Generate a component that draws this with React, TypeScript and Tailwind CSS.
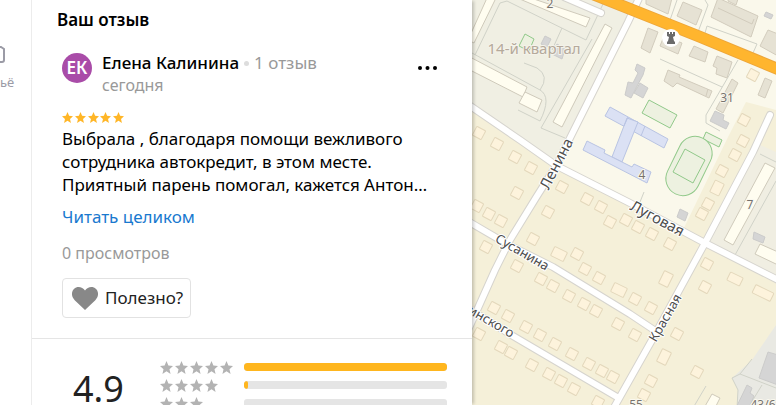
import React from 'react';

const StarIcon = ({ className }: { className: string }) => (
    <svg viewBox="0 0 24 24" className={className} fill="currentColor" aria-hidden="true">
        <path d="M12 0l3.500 8.300 8.500.8-6.500 5.900 2 8.800L12 19l-7.500 4.800 2-8.800L0 9.100l8.500-.8z" />
    </svg>
);

const HeartIcon = () => (
    <svg viewBox="0 0 26 23" className="h-[23px] w-[26px] text-[#888888]" fill="currentColor" aria-hidden="true">
        <path d="M13 23L2.700 13.200C-.9 9.700-.8 4.500 2 1.900 5.200-1 10.400-.3 13 3.600 15.600-.3 20.800-1 24 1.900c2.800 2.600 2.900 7.800-.7 11.300z" />
    </svg>
);

const DotsIcon = () => (
    <svg viewBox="0 0 20 4" className="h-1 w-5" fill="currentColor" aria-hidden="true">
        <circle cx="2" cy="2" r="2" />
        <circle cx="9.500" cy="2" r="2" />
        <circle cx="17" cy="2" r="2" />
    </svg>
);

const ratings = [
    { stars: 5, percent: 100 },
    { stars: 4, percent: 2 },
    { stars: 3, percent: 0 },
    { stars: 2, percent: 0 },
    { stars: 1, percent: 0 },
];

// Map data: centres of the private houses, all turned the same way as the streets
const houses = [
    [479, 133], [497, 144], [515, 157], [531, 168], [562, 187], [517, 193], [548, 212], [587, 199],
    [601, 207], [610, 222], [626, 220], [477, 206], [489, 214], [501, 221], [533, 239], [486, 247],
    [517, 266], [577, 254], [585, 269], [599, 278], [541, 279], [553, 286], [569, 296], [584, 304],
    [596, 311], [618, 324], [494, 308], [508, 316], [526, 327], [540, 335], [555, 344], [572, 354],
    [589, 364], [602, 371], [613, 377], [479, 334], [501, 347], [511, 353], [532, 365], [549, 374],
    [561, 381], [574, 389], [598, 402], [743, 141], [735, 155], [722, 171], [708, 204], [702, 214],
    [638, 227], [652, 234], [670, 244], [707, 264], [705, 287], [635, 299], [651, 308],
    [677, 334], [635, 335], [697, 372], [651, 381], [644, 395], [753, 75], [744, 120],
];

const bigHouses = [
    { x: 559, y: 254, w: 14, h: 10 },
    { x: 619, y: 290, w: 14, h: 10 },
    { x: 735, y: 279, w: 14, h: 9 },
    { x: 763, y: 293, w: 20, h: 9 },
    { x: 717, y: 188, w: 10, h: 13 },
    { x: 666, y: 279, w: 10, h: 14 },
    { x: 664, y: 357, w: 10, h: 14 },
];

const blocks = [
    '487,-2 496,-2 474,43 468,40',
    '515,-3 525,-4 590,18 586,27',
    '605,24 612,28 562,127 553,122',
    '468,56 527,87 523,97 468,69',
    '525,92 542,100 537,112 519,103',
    '765,163 775,168 733,245 724,240',
    '760,244 778,252 778,265 755,254',
    '712,394 720,398 714,410 704,408',
];

const buildings = [
    '646,-2 672,-2 668,14 646,4',
    '683,2 702,10 696,25 677,16',
    '718,-2 758,16 751,37 711,17',
    '729,-5 738,-1 736,5 728,1',
    '768,30 778,34 778,56 760,46',
    '648,28 658,32 650,53 641,48',
    '664,36 682,43 678,54 660,46',
    '694,46 708,52 705,62 689,56',
    '717,56 732,62 727,78 716,74 717,68 713,66',
    '668,70 680,75 679,77 712,91 709,98 677,83 673,87 664,81',
    '732,79 738,83 723,113 716,109',
    '765,78 772,81 765,98 758,95',
];

const greyBuildings = [
    '637,64 645,68 643,75 636,88 631,98 625,95 628,82 633,83 638,73 635,70',
    '640,83 648,88 643,98 634,93',
    '715,111 724,115 723,120 729,123 726,129 710,121',
    '545,36 551,39 547,47 541,44',
    '557,44 565,49 562,59 552,54',
    '766,12 773,15 771,19 764,16',
    '754,232 765,237 763,243 753,239',
    '680,209 688,213 685,221 677,217',
    '768,352 778,355 778,385 759,378',
    '747,385 752,388 750,393 754,396 748,410 735,410',
];

const school = [
    '610,107 668,139 664,148 605,116',
    '627,118 638,122 622,162 612,157',
    '587,141 605,150 604,153 632,167 634,164 651,172 647,183 583,150',
];

const paths = [
    'M475 55 500 3 507 1 586 40 603 4',
    'M562 28 552 50',
    'M592 39 541 128 565 138',
    'M518 110 540 121',
    'M524 63 537 68Q550 76 540 90',
    'M472 53 540 90Q552 97 540 121',
    'M660 59 722 87M738 60 706 115V123L720 131',
    'M705 33 707 26 757 44 753 53',
    'M698 32 708 5 705 0M670 20 677 0',
    'M644 192 640 202',
    'M735 255 776 181M760 154 776 162',
    'M752 359 740 374 776 388M706 386 693 408M762 385 748 408',
    'M740 374 732 378 738 390 737 408',
];

const roads = [
    'M641 -6 628 22 568 142 556 166 537 196 510 240 495 270 478 308 468 330',
    'M466 103 520 140 557 166 630 203 705 243 780 281',
    'M770 115 753 152 705 243 652 340 612 411',
    'M466 220 507 244 553 267 630 314 657 332',
    'M466 307 513 336 617 397',
    'M564 -3 601 13',
];

const TowerPin = () => (
    <g>
        <circle cx="671" cy="38" r="9" fill="#ffffff" />
        <path d="M667 32h2v2h1v-2h2v2h1v-2h2v4l-2 1 1 4 1 1v2h-8v-2l1-1 1-4-2-1z" fill="#6b6b6b" />
    </g>
);

const CityMap = () => (
    <svg
        viewBox="472 0 304 405"
        preserveAspectRatio="xMinYMin slice"
        className="block h-full w-full"
        role="img"
        aria-label="Карта"
    >
        <rect x="472" width="1200" height="1600" fill="#f5f0d9" />
        {/* districts */}
        <path d="M472 0H640L566 146 557 166 472 107z" fill="#f0efe3" />
        <path d="M640 0H776V110L746 102 728 137 682 232 557 166z" fill="#faf8eb" />
        <path d="M758 144 776 152V281L705 243z" fill="#f0eee2" />
        <path d="M776 325 752 360 732 378 738 390 737 405H776z" fill="#e9e9e3" />
        <g fill="none" stroke="#d0d2c8" strokeWidth="1">
            {paths.map((d) => <path key={d} d={d} />)}
        </g>

        {/* school grounds */}
        <g fill="#edf1e0" stroke="#91c98a" strokeWidth="1">
            <polygon points="649,100 677,115 670,128 642,113" />
            <polygon points="706,132 722,140 719,147 703,139" />
            <polygon points="525,34 534,39 529,51 519,46" />
            <rect x="672" y="135" width="34" height="62" rx="17" transform="rotate(26 689 166)" />
            <polygon points="685,149 705,160 693,183 673,172" />
        </g>
        <g fill="#dbe1f4" stroke="#b9c4e3" strokeWidth="1">
            {school.map((points) => <polygon key={points} points={points} />)}
            <path d="M628 117 624 126M645 126 641 136" />
        </g>

        {/* streets */}
        <g fill="none" stroke="#d6d4ce" strokeWidth="8" strokeLinecap="round" strokeLinejoin="round">
            {roads.map((d) => <path key={d} d={d} />)}
        </g>
        <g fill="none" stroke="#ffffff" strokeWidth="6" strokeLinecap="round" strokeLinejoin="round">
            {roads.map((d) => <path key={d} d={d} />)}
        </g>
        <path d="M580 -11 620 5 698 36 780 70" fill="none" stroke="#eda63a" strokeWidth="12" />
        <path d="M580 -11 620 5 698 36 780 70" fill="none" stroke="#ffb52e" strokeWidth="10" />

        {/* buildings */}
        <g fill="#fffdf0" stroke="#cfcabb" strokeWidth="1" strokeLinejoin="round">
            {blocks.map((points) => <polygon key={points} points={points} />)}
        </g>
        <g fill="#e6e2d4" stroke="#d2ccbd" strokeWidth="1" strokeLinejoin="round">
            {buildings.map((points) => <polygon key={points} points={points} />)}
            <path d="M718 8 752 24 754 19M708 89 706 96" />
        </g>
        <g fill="#d5d5d5" stroke="#cbcbca" strokeWidth="1" strokeLinejoin="round">
            {greyBuildings.map((points) => <polygon key={points} points={points} />)}
        </g>
        <g fill="#fdf3dc" stroke="#e3d7bb" strokeWidth="1">
            {houses.map(([x, y]) => (
                <rect key={`${x}-${y}`} x={x - 5} y={y - 5} width="10" height="10" rx="1" transform={`rotate(28 ${x} ${y})`} />
            ))}
            {bigHouses.map(({ x, y, w, h }) => (
                <rect key={`${x}-${y}`} x={x - w / 2} y={y - h / 2} width={w} height={h} rx="1" transform={`rotate(26 ${x} ${y})`} />
            ))}
        </g>

        <TowerPin />

        {/* labels */}
        <g className="font-['Noto_Sans',sans-serif]" textAnchor="middle" strokeLinejoin="round" paintOrder="stroke">
            <text x="534" y="54" fontSize="15" fill="#b5a99b" stroke="#f4f3ea" strokeWidth="2">14-й квартал</text>
            <g fontSize="12" fill="#77736e" stroke="#faf8ee" strokeWidth="2">
                <text x="550" y="8">2</text>
                <text x="727" y="102">31</text>
                <text x="642" y="179">4</text>
                <text x="750" y="209">7</text>
                <text x="636" y="409">55</text>
                <text x="763" y="409">43/6</text>
            </g>
            <g fontSize="15" fill="#4d4d4d" stroke="#ffffff" strokeWidth="2">
                <text transform="translate(561 166) rotate(-63)">Ленина</text>
                <text transform="translate(655 223) rotate(28)">Луговая</text>
                <g fontSize="13">
                    <text transform="translate(520 256) rotate(30)">Сусанина</text>
                    <text transform="translate(669 320) rotate(-60)">Красная</text>
                    <text transform="translate(511 338) rotate(30)" textAnchor="end">инского</text>
                </g>
            </g>
        </g>
    </svg>
);

const SideRail = () => (
    <nav className="flex w-8 shrink-0 flex-col items-start overflow-hidden border-r border-[#ececec] pt-11">
        <a href="#housing" className="flex flex-col text-[13px] leading-5 text-[#9b9ba6]">
            <svg viewBox="0 0 6 22" className="mb-[6px] h-[22px] w-[6px]" fill="none" stroke="currentColor" strokeWidth="2" aria-hidden="true">
                <path d="M-3 3H1L4 5V16Q4 18 2 18H-3" />
            </svg>
            <span>ьё</span>
        </a>
    </nav>
);

const Review = () => (
    <section className="border-b border-[#e5e5e5] pt-2 pb-5">
        <h2 className="px-[25px] text-[17px] leading-6 font-semibold">Ваш отзыв</h2>
        <div className="px-[30px] pt-5">
            <div className="flex items-start gap-[10px]">
                <div className="mt-px flex h-[30px] w-[30px] items-center justify-center rounded-full bg-[#a94ca8] text-[17px] font-semibold text-white">
                    ЕК
                </div>
                <div className="flex-1 leading-[22px]">
                    <div className="flex items-center gap-[5px] text-[17px]">
                        <span className="font-medium">Елена Калинина</span>
                        <span className="h-[5px] w-[5px] rounded-full bg-[#dddddd]" />
                        <span className="text-[#999999]">1 отзыв</span>
                    </div>
                    <div className="text-base leading-[22px] text-[#999999]">сегодня</div>
                </div>
                <button type="button" aria-label="Ещё" className="mt-1 mr-[2px] flex h-6 w-6 items-center justify-center">
                    <DotsIcon />
                </button>
            </div>

            <div className="mt-4 flex w-[62px] justify-between text-[#ffb627]" role="img" aria-label="Оценка 5">
                {[1, 2, 3, 4, 5].map((n) => <StarIcon key={n} className="h-[11px] w-[11px]" />)}
            </div>
            <p className="mt-1 text-[17px] leading-[23px]">
                Выбрала , благодаря помощи вежливого<br />
                сотрудника автокредит, в этом месте.<br />
                Приятный парень помогал, кажется Антон…
            </p>
            <a href="#review" className="mt-[9px] block text-[17px] leading-6 text-[#1979cf]">Читать целиком</a>
            <div className="mt-3 text-base leading-6 text-[#999999]">0 просмотров</div>
            <button type="button" className="mt-[13px] flex h-10 items-center gap-[7px] rounded border border-[#e2e2e2] pr-[7px] pl-[9px] text-[17px] text-[#222222]">
                <HeartIcon />
                Полезно?
            </button>
        </div>
    </section>
);

const RatingSummary = () => (
    <section className="flex pt-[19px] pr-[25px] pl-[41px]">
        <div className="w-[87px] pt-2 text-[36px] leading-[46px] text-[#222222]">4.9</div>
        <ul className="flex-1">
            {ratings.map(({ stars, percent }) => (
                <li key={stars} className="flex h-[18px] items-center">
                    <div className="flex w-[84px] gap-[2px] text-[#b3b3b3]" role="img" aria-label={`${stars}`}>
                        {Array.from({ length: stars }, (_, i) => <StarIcon key={i} className="h-[13px] w-[13px]" />)}
                    </div>
                    <div className="h-2 flex-1 overflow-hidden rounded-[3px] bg-[#e5e5e5]">
                        <div className="h-full rounded-[3px] bg-[#ffb61e]" style={{ width: `${percent}%` }} />
                    </div>
                </li>
            ))}
        </ul>
    </section>
);

export default function App() {
    return (
        <div className="flex h-screen overflow-hidden bg-white font-['Noto_Sans',sans-serif] text-black">
            <SideRail />
            <main className="z-10 w-[440px] shrink-0 overflow-hidden bg-white shadow-[3px_0_3px_-1px_rgba(0,0,0,0.2)]">
                <Review />
                <RatingSummary />
            </main>
            <div className="min-w-0 flex-1">
                <CityMap />
            </div>
        </div>
    );
}
